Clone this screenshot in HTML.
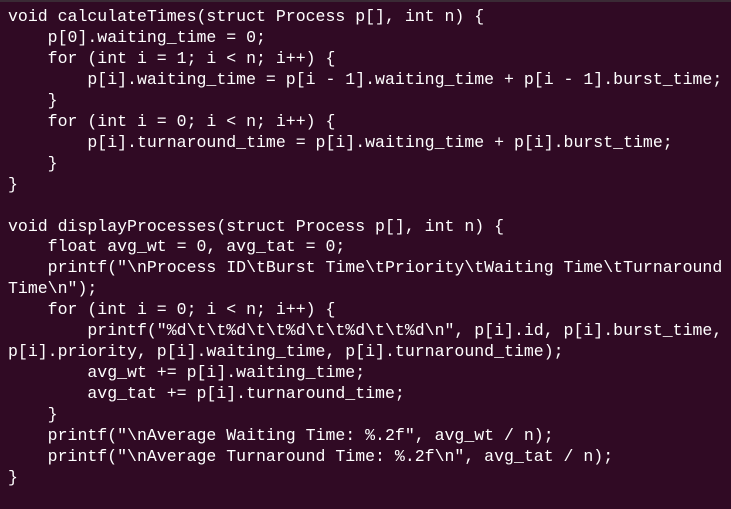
<!DOCTYPE html><html><head><style>
html,body{margin:0;padding:0;}
body{width:731px;height:509px;background:#300a24;overflow:hidden;position:relative;}
.top{position:absolute;top:0;left:0;width:731px;height:2px;background:#3a2a35;}
pre{position:absolute;left:8px;top:7px;margin:0;font-family:"Liberation Mono",monospace;font-size:16.55px;line-height:20.95px;color:#ffffff;white-space:pre;}
</style></head><body><div class="top"></div><pre>void calculateTimes(struct Process p[], int n) {
    p[0].waiting_time = 0;
    for (int i = 1; i &lt; n; i++) {
        p[i].waiting_time = p[i - 1].waiting_time + p[i - 1].burst_time;
    }
    for (int i = 0; i &lt; n; i++) {
        p[i].turnaround_time = p[i].waiting_time + p[i].burst_time;
    }
}

void displayProcesses(struct Process p[], int n) {
    float avg_wt = 0, avg_tat = 0;
    printf("\nProcess ID\tBurst Time\tPriority\tWaiting Time\tTurnaround
Time\n");
    for (int i = 0; i &lt; n; i++) {
        printf("%d\t\t%d\t\t%d\t\t%d\t\t%d\n", p[i].id, p[i].burst_time,
p[i].priority, p[i].waiting_time, p[i].turnaround_time);
        avg_wt += p[i].waiting_time;
        avg_tat += p[i].turnaround_time;
    }
    printf("\nAverage Waiting Time: %.2f", avg_wt / n);
    printf("\nAverage Turnaround Time: %.2f\n", avg_tat / n);
}</pre></body></html>
